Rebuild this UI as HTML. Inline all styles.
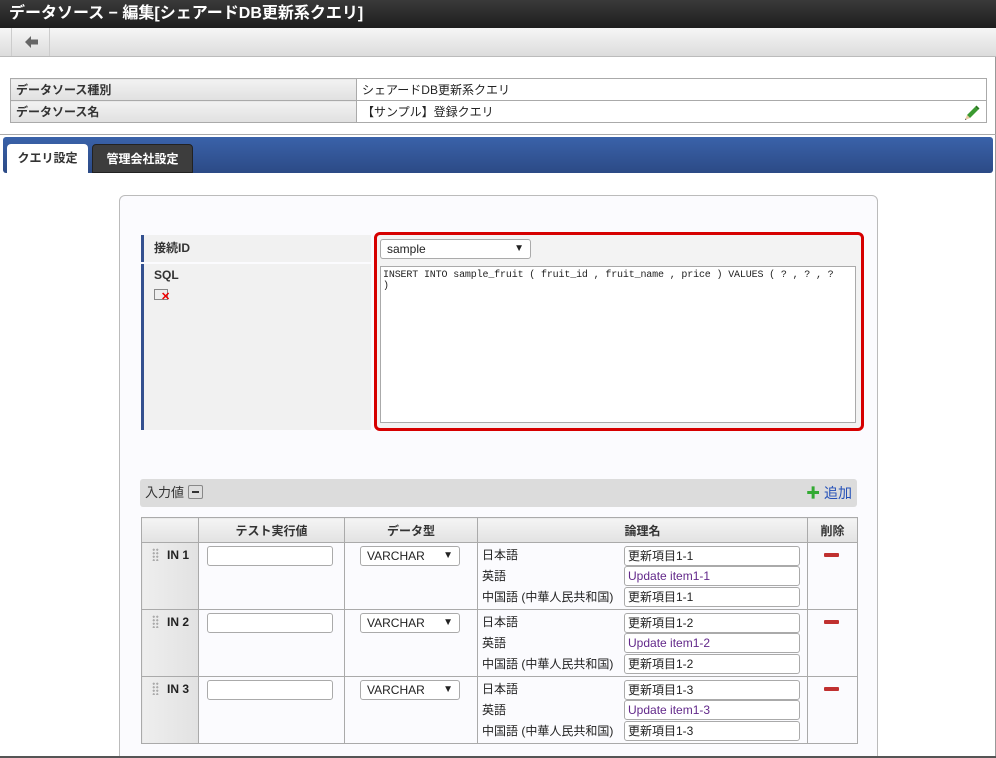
<!DOCTYPE html>
<html style="width:996px;height:758px;overflow:hidden"><head><meta charset="utf-8"><style>
*{box-sizing:border-box;margin:0;padding:0}
body{width:996px;height:758px;overflow:hidden;background:#fff;font-family:"Liberation Sans","Noto Sans CJK JP",sans-serif;font-size:12px;color:#222;position:relative}
.a{position:absolute}
.title{left:0;top:0;width:996px;height:28px;background:linear-gradient(#3a3a3a,#1e1e1e);color:#fff;font-size:16px;font-weight:bold;line-height:28px;padding-left:9px}
.tool{left:0;top:28px;width:996px;height:29px;background:linear-gradient(#f6f6f6,#dcdcdc);border-bottom:1px solid #bbb}
.info{left:10px;top:78px;width:977px;border-collapse:collapse}
.info td{border:1px solid #aaa;height:22px;padding:0 5px;font-size:12px}
.info td.h{background:linear-gradient(#f2f2f2,#e0e0e0);font-weight:bold;width:346px;color:#333}
.tabbar{left:3px;top:137px;width:990px;height:36px;background:linear-gradient(#3a62aa,#2c4a86);border-radius:3px}
.tab{top:144px;height:29px;border-radius:4px 4px 0 0;font-weight:bold;line-height:28px;text-align:center}
.panel{left:119px;top:195px;width:759px;height:600px;background:#fbfbfe;border:1px solid #bbb;border-radius:6px}
.lab{background:#f1f1f1;border-left:3px solid #33508f;font-weight:bold;padding:4px 0 0 10px;color:#333}
.red{left:374px;top:232px;width:490px;height:199px;border:3px solid #d60000;border-radius:6px;background:#f3f3f3}
.sel{background:#fff;border:1px solid #aaa;border-radius:3px;height:20px;line-height:18px;padding-left:6px;font-size:12px}
.sel::after{content:"▼";position:absolute;right:6px;font-size:10px}
.grid{left:141px;top:517px;border-collapse:collapse}
.grid td{border:1px solid #aaa;vertical-align:top;font-size:12px}
.grid .hd td{height:25px;background:linear-gradient(#f4f4f4,#e2e2e2);font-weight:bold;text-align:center;vertical-align:middle;color:#333}
.inp{position:absolute;background:#fff;border:1px solid #aaa;border-radius:3px;height:20px;line-height:18px;padding-left:3px}
.dots{position:absolute;width:7px;height:13px;background-image:radial-gradient(circle,#aaa 1px,transparent 1.2px);background-size:3.5px 3.5px}
</style></head><body>
<div class="a title">データソース − 編集[シェアードDB更新系クエリ]</div>
<div class="a tool"><div class="a" style="left:11px;top:0;width:39px;height:28px;border-left:1px solid #ccc;border-right:1px solid #ccc"><svg class="a" style="left:13px;top:8px" width="13" height="12" viewBox="0 0 13 12"><path d="M0 6 L6 0 L6 3.5 L13 3.5 L13 8.5 L6 8.5 L6 12 Z" fill="#666"/></svg></div></div>
<div class="a" style="left:995px;top:57px;width:1px;height:701px;background:#999"></div>
<table class="a info"><tr><td class="h">データソース種別</td><td>シェアードDB更新系クエリ</td></tr><tr><td class="h">データソース名</td><td>【サンプル】登録クエリ</td></tr></table>
<svg class="a" style="left:964px;top:104px" width="16" height="16" viewBox="0 0 16 16"><path d="M3 11 L11 3 L14 6 L6 14 Z" fill="#3a9a30"/><path d="M11 3 L12.5 1.5 L15.5 4.5 L14 6 Z" fill="#2a7a20"/><path d="M3 11 L6 14 L1 16 Z" fill="#e8c9a0"/><path d="M1.5 14.5 L2.5 15.5 L1 16 Z" fill="#333"/></svg>
<div class="a" style="left:0;top:134px;width:996px;height:1px;background:#aaa"></div>
<div class="a tabbar"></div>
<div class="a tab" style="left:7px;width:81px;background:#fff;color:#333">クエリ設定</div>
<div class="a tab" style="left:92px;width:101px;background:#3d3d3d;color:#fff;border:1px solid #222">管理会社設定</div>
<div class="a panel"></div>
<div class="a lab" style="left:141px;top:235px;width:230px;height:27px">接続ID</div>
<div class="a lab" style="left:141px;top:264px;width:230px;height:166px">SQL
<div style="margin-top:7px;width:14px;height:11px;border:1px solid #888;background:#eee;position:relative"><span style="position:absolute;left:6px;top:2px;color:#e00;font-size:11px;line-height:10px">✕</span></div></div>
<div class="a red"></div>
<div class="a sel" style="left:380px;top:239px;width:151px">sample</div>
<div class="a" style="left:380px;top:266px;width:476px;height:157px;background:#fff;border:1px solid #aaa;font-family:'Liberation Mono','Noto Sans CJK JP',monospace;font-size:10px;line-height:11px;padding:3px 2px;letter-spacing:-0.15px;white-space:nowrap;overflow:hidden">INSERT INTO sample_fruit ( fruit_id , fruit_name , price ) VALUES ( ? , ? , ?<br>)</div>
<div class="a" style="left:140px;top:479px;width:717px;height:28px;background:#dcdcdc;border-radius:3px;font-size:13px;line-height:28px;padding-left:5px;color:#333">入力値 <span style="display:inline-block;width:15px;height:14px;border:1px solid #888;border-radius:2px;background:#ddd;vertical-align:-2px;position:relative"><span style="position:absolute;left:3px;top:5px;width:7px;height:2px;background:#333"></span></span>
<span style="position:absolute;right:5px;color:#2450b8;font-size:14px"><b style="color:#3a3">✚</b> 追加</span></div>
<table class="a grid">
<tr class="hd"><td style="width:57px"></td><td style="width:146px">テスト実行値</td><td style="width:133px">データ型</td><td style="width:330px">論理名</td><td style="width:50px">削除</td></tr>
</table>
<table class="a grid" style="top:542px">
<tr><td style="width:57px;height:67px;background:linear-gradient(90deg,#eee,#e2e2e2)"></td><td style="width:146px"></td><td style="width:133px"></td><td style="width:330px"></td><td style="width:50px"></td></tr>
<tr><td style="height:67px;background:linear-gradient(90deg,#eee,#e2e2e2)"></td><td></td><td></td><td></td><td></td></tr>
<tr><td style="height:67px;background:linear-gradient(90deg,#eee,#e2e2e2)"></td><td></td><td></td><td></td><td></td></tr>
</table>

<div class="dots" style="left:152px;top:548px"></div><div class="a" style="left:167px;top:548px;font-weight:bold">IN 1</div>
<div class="inp" style="left:207px;top:546px;width:126px"></div>
<div class="a sel" style="left:360px;top:546px;width:100px">VARCHAR</div>
<div class="a" style="left:482px;top:545px;line-height:21px">日本語<br>英語<br>中国語 (中華人民共和国)</div>
<div class="inp" style="left:624px;top:546px;width:176px">更新項目1-1</div>
<div class="inp" style="left:624px;top:566px;width:176px;color:#62288a">Update item1-1</div>
<div class="inp" style="left:624px;top:587px;width:176px">更新項目1-1</div>
<div class="a" style="left:824px;top:553px;width:15px;height:4px;background:#c03030;border-radius:1px"></div>

<div class="dots" style="left:152px;top:615px"></div><div class="a" style="left:167px;top:615px;font-weight:bold">IN 2</div>
<div class="inp" style="left:207px;top:613px;width:126px"></div>
<div class="a sel" style="left:360px;top:613px;width:100px">VARCHAR</div>
<div class="a" style="left:482px;top:612px;line-height:21px">日本語<br>英語<br>中国語 (中華人民共和国)</div>
<div class="inp" style="left:624px;top:613px;width:176px">更新項目1-2</div>
<div class="inp" style="left:624px;top:633px;width:176px;color:#62288a">Update item1-2</div>
<div class="inp" style="left:624px;top:654px;width:176px">更新項目1-2</div>
<div class="a" style="left:824px;top:620px;width:15px;height:4px;background:#c03030;border-radius:1px"></div>

<div class="dots" style="left:152px;top:682px"></div><div class="a" style="left:167px;top:682px;font-weight:bold">IN 3</div>
<div class="inp" style="left:207px;top:680px;width:126px"></div>
<div class="a sel" style="left:360px;top:680px;width:100px">VARCHAR</div>
<div class="a" style="left:482px;top:679px;line-height:21px">日本語<br>英語<br>中国語 (中華人民共和国)</div>
<div class="inp" style="left:624px;top:680px;width:176px">更新項目1-3</div>
<div class="inp" style="left:624px;top:700px;width:176px;color:#62288a">Update item1-3</div>
<div class="inp" style="left:624px;top:721px;width:176px">更新項目1-3</div>
<div class="a" style="left:824px;top:687px;width:15px;height:4px;background:#c03030;border-radius:1px"></div>
<div class="a" style="left:0;top:756px;width:996px;height:2px;background:#555"></div>
</body></html>
